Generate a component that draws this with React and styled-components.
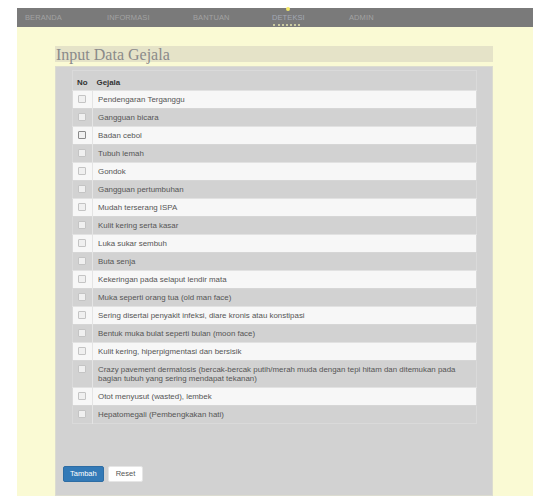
import React from "react";
import styled, { createGlobalStyle } from "styled-components";

const Global = createGlobalStyle`
  html, body { margin: 0; padding: 0; background: #ffffff; }
  body { font-family: "Liberation Sans", Arial, sans-serif; }
`;

const Page = styled.div`
  margin: 8px 0 0 17px;
  background: #fafad4;
  min-height: 488px;
`;

const Nav = styled.nav`
  height: 19px;
  background: #7a7a7a;
  display: flex;
  align-items: center;
  padding-left: 8px;
`;

const NavItem = styled.a`
  position: relative;
  width: ${(p) => p.$w}px;
  font-size: 7.5px;
  letter-spacing: 0.1px;
  text-transform: uppercase;
  color: ${(p) => (p.$active ? "#a3a8b4" : "#a2a2a2")};
  text-decoration: none;
  line-height: 19px;
  white-space: nowrap;
`;

const ActiveDot = styled.span`
  position: absolute;
  left: 14px;
  top: -1px;
  width: 4px;
  height: 4px;
  border-radius: 50%;
  background: #f4e96a;
`;

const ActiveLine = styled.span`
  position: absolute;
  left: 1px;
  bottom: 1px;
  width: 27px;
  border-bottom: 2px dotted #c9c9a0;
`;

const Content = styled.div`
  padding: 19px 40px 1px 38px;
`;

const TitleBar = styled.h2`
  margin: 0;
  height: 16px;
  background: #e5e3c8;
  font-family: "Liberation Serif", "Times New Roman", serif;
  font-weight: normal;
  font-size: 16px;
  line-height: 18px;
  color: #8a8a8a;
  padding-left: 1px;
  overflow: visible;
`;

const Panel = styled.div`
  margin-top: 4px;
  background: #d2d2d2;
  border: 1px solid #dcdcd0;
  padding: 3px 15px 13px 7px;
`;

const Table = styled.table`
  margin-left: 9px;
  width: calc(100% - 9px);
  border-collapse: collapse;
  border: 1px solid #dadada;
  font-size: 7.9px;
  color: #555555;
`;

const HeadCell = styled.th`
  text-align: left;
  font-weight: bold;
  color: #333333;
  height: 16px;
  padding: 0 4px 3px 4px;
  vertical-align: bottom;
  line-height: 9px;
  width: ${(p) => (p.$narrow ? "11px" : "auto")};
`;

const Row = styled.tr`
  background: ${(p) => (p.$odd ? "#f7f7f7" : "transparent")};
`;

const Cell = styled.td`
  padding: 4px 5px 4px 5px;
  line-height: 9px;
  vertical-align: top;
  border-top: 1px solid ${(p) => (p.$odd ? "#e2e2e2" : "#d6d6d6")};
  border-left: ${(p) => (p.$text ? "1px solid #e4e4e4" : "none")};
  width: ${(p) => (p.$narrow ? "9px" : "auto")};
`;

const Check = styled.input.attrs({ type: "checkbox" })`
  appearance: none;
  margin: 0;
  display: block;
  width: 8px;
  height: 8px;
  border: 1px solid ${(p) => (p.$dark ? "#8a8a8a" : "#c4c4c4")};
  border-radius: 1px;
  background: #f0f0f0;
`;

const Actions = styled.div`
  display: flex;
  gap: 4px;
  margin-top: 42px;
`;

const Button = styled.button`
  height: 16px;
  padding: 0 ${(p) => (p.$primary ? "6px" : "7px")};
  border: 1px solid ${(p) => (p.$primary ? "#2e6da4" : "#e6e6e6")};
  border-radius: 2px;
  background: ${(p) => (p.$primary ? "#337ab7" : "#ffffff")};
  color: ${(p) => (p.$primary ? "#ffffff" : "#555555")};
  font-family: "Liberation Sans", Arial, sans-serif;
  font-size: 7.5px;
  line-height: 14px;
`;

const navItems = [
  { label: "Beranda", w: 82 },
  { label: "Informasi", w: 86 },
  { label: "Bantuan", w: 79 },
  { label: "Deteksi", w: 77, active: true },
  { label: "Admin", w: 60 },
];

const gejala = [
  "Pendengaran Terganggu",
  "Gangguan bicara",
  "Badan cebol",
  "Tubuh lemah",
  "Gondok",
  "Gangguan pertumbuhan",
  "Mudah terserang ISPA",
  "Kulit kering serta kasar",
  "Luka sukar sembuh",
  "Buta senja",
  "Kekeringan pada selaput lendir mata",
  "Muka seperti orang tua (old man face)",
  "Sering disertai penyakit infeksi, diare kronis atau konstipasi",
  "Bentuk muka bulat seperti bulan (moon face)",
  "Kulit kering, hiperpigmentasi dan bersisik",
  "Crazy pavement dermatosis (bercak-bercak putih/merah muda dengan tepi hitam dan ditemukan pada bagian tubuh yang sering mendapat tekanan)",
  "Otot menyusut (wasted), lembek",
  "Hepatomegali (Pembengkakan hati)",
];

export default function App() {
  return (
    <>
      <Global />
      <Page>
        <Nav>
          {navItems.map((item) => (
            <NavItem key={item.label} href="#" $w={item.w} $active={item.active}>
              {item.active && <ActiveDot />}
              {item.label}
              {item.active && <ActiveLine />}
            </NavItem>
          ))}
        </Nav>
        <Content>
          <TitleBar>Input Data Gejala</TitleBar>
          <Panel>
            <Table>
              <thead>
                <tr>
                  <HeadCell $narrow>No</HeadCell>
                  <HeadCell>Gejala</HeadCell>
                </tr>
              </thead>
              <tbody>
                {gejala.map((g, i) => {
                  const odd = i % 2 === 0;
                  return (
                    <Row key={g} $odd={odd}>
                      <Cell $narrow $odd={odd}>
                        <Check $dark={i === 2} />
                      </Cell>
                      <Cell $text $odd={odd}>
                        {g}
                      </Cell>
                    </Row>
                  );
                })}
              </tbody>
            </Table>
            <Actions>
              <Button $primary>Tambah</Button>
              <Button>Reset</Button>
            </Actions>
          </Panel>
        </Content>
      </Page>
    </>
  );
}
